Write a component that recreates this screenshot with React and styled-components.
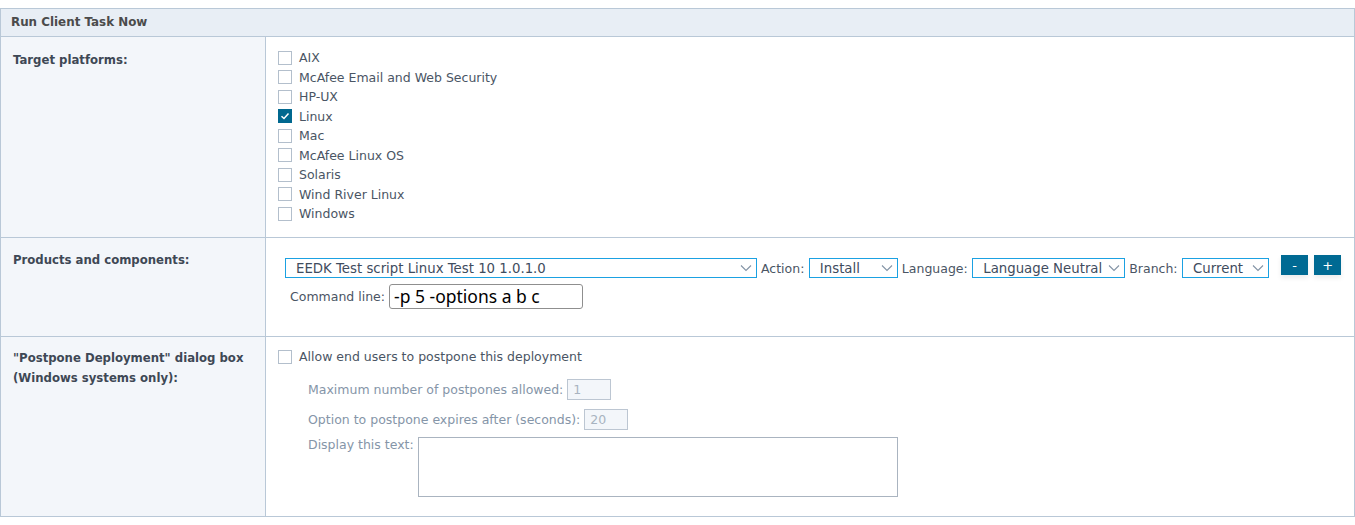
import React from "react";
import styled, { createGlobalStyle } from "styled-components";

const Global = createGlobalStyle`
  html, body { margin: 0; padding: 0; background: #fff; }
  body { padding-top: 8px; font-family: "DejaVu Sans", Verdana, sans-serif; font-size: 12.5px; color: #4a5564; }
`;

const Panel = styled.div`
  width: 1355px;
  box-sizing: border-box;
  border-top: 1px solid #b9c8d7;
  border-left: 1px solid #b9c8d7;
  border-right: 1px solid #b9c8d7;
`;

const Header = styled.div`
  height: 27px;
  line-height: 27px;
  padding-left: 10px;
  background: #e8eef5;
  border-bottom: 1px solid #b9c8d7;
  font-weight: bold;
  color: #4b4b4b;
  font-size: 11.9px;
`;

const Row = styled.div`
  display: grid;
  grid-template-columns: 265px 1fr;
  height: ${(p) => p.$h}px;
  border-bottom: 1px solid #b9c8d7;
`;

const LabelCell = styled.div`
  background: #f3f6fa;
  border-right: 1px solid #b9c8d7;
  padding: ${(p) => p.$pt || 12}px 12px 0 12px;
  font-weight: bold;
  font-size: 11.7px;
  line-height: 20px;
  color: #3e4855;
`;

const ContentCell = styled.div`
  padding: ${(p) => p.$pt}px 0 0 ${(p) => p.$pl}px;
  background: #fff;
`;

const CheckList = styled.div`
  display: flex;
  flex-direction: column;
`;

const CheckItem = styled.label`
  display: flex;
  align-items: center;
  height: 19.5px;
  gap: 7px;
  color: #4a5564;
`;

const Box = styled.span`
  width: 12px;
  height: 12px;
  border: 1px solid #b3bfcc;
  background: ${(p) => (p.$checked ? "#00688f" : "#fff")};
  border-color: ${(p) => (p.$checked ? "#00688f" : "#b3bfcc")};
  display: flex;
  align-items: center;
  justify-content: center;
  flex-shrink: 0;
`;

const Check = ({ checked }) => (
  <Box $checked={checked}>
    {checked && (
      <svg width="10" height="10" viewBox="0 0 10 10">
        <path d="M1.5 5.2 L4 7.5 L8.5 2.5" fill="none" stroke="#fff" strokeWidth="1.5" />
      </svg>
    )}
  </Box>
);

const ControlLine = styled.div`
  display: flex;
  align-items: center;
  height: 20px;
`;

const InlineLabel = styled.span`
  margin: 0 ${(p) => p.$mr ?? 4.5}px 0 ${(p) => p.$ml ?? 4}px;
  color: #4a5564;
  white-space: nowrap;
`;

const Select = styled.div`
  width: ${(p) => p.$w}px;
  height: 20px;
  box-sizing: border-box;
  border: 1px solid #1ba1e2;
  display: flex;
  align-items: center;
  justify-content: space-between;
  padding: 0 4px 0 10px;
  color: #3f4c5e;
  font-size: 13.3px;
  white-space: nowrap;
  flex-shrink: 0;
`;

const Chevron = () => (
  <svg width="12" height="8" viewBox="0 0 12 8">
    <path d="M1 1.5 L6 6.5 L11 1.5" fill="none" stroke="#8393a5" strokeWidth="1.1" />
  </svg>
);

const Btn = styled.button`
  width: 27px;
  height: 20px;
  border: none;
  background: #006a93;
  color: #fff;
  font-family: "DejaVu Sans", sans-serif;
  font-size: 13px;
  padding: 0;
  margin-left: ${(p) => p.$ml}px;
  align-self: flex-start;
  margin-top: -3px;
  box-shadow: 0 3px 5px rgba(0, 0, 0, 0.08);
`;

const CmdLine = styled.div`
  display: flex;
  align-items: center;
  margin-top: 6px;
  padding-left: 5px;
  gap: 4px;
`;

const TextInput = styled.div`
  width: 194px;
  height: 25px;
  box-sizing: border-box;
  border: 1px solid #8f8f8f;
  border-radius: 3px;
  padding-left: 4px;
  font-family: "Noto Sans", "Open Sans", sans-serif;
  font-size: 17.5px;
  line-height: 22px;
  color: #000;
  white-space: nowrap;
  overflow: hidden;
`;

const SubBlock = styled.div`
  padding-left: 30px;
  display: flex;
  flex-direction: column;
`;

const SubLine = styled.div`
  display: flex;
  align-items: ${(p) => (p.$top ? "flex-start" : "center")};
  gap: 4px;
  color: #8595a8;
  margin-top: ${(p) => p.$mt}px;
  span { white-space: nowrap; }
`;

const SmallInput = styled.div`
  width: 44px;
  height: 21px;
  box-sizing: border-box;
  border: 1px solid #bcc6d2;
  background: #f3f6fa;
  color: #a8b3c0;
  padding-left: 5px;
  line-height: 19px;
`;

const TextArea = styled.div`
  width: 480px;
  height: 60px;
  box-sizing: border-box;
  border: 1px solid #aab4c0;
  background: #fff;
`;

const platforms = [
  "AIX",
  "McAfee Email and Web Security",
  "HP-UX",
  "Linux",
  "Mac",
  "McAfee Linux OS",
  "Solaris",
  "Wind River Linux",
  "Windows",
];

export default function App() {
  return (
    <>
      <Global />
      <Panel>
        <Header>Run Client Task Now</Header>
        <Row $h={200}>
          <LabelCell $pt={13}>Target platforms:</LabelCell>
          <ContentCell $pt={11} $pl={12}>
            <CheckList>
              {platforms.map((p) => (
                <CheckItem key={p}>
                  <Check checked={p === "Linux"} />
                  {p}
                </CheckItem>
              ))}
            </CheckList>
          </ContentCell>
        </Row>
        <Row $h={98}>
          <LabelCell>Products and components:</LabelCell>
          <ContentCell $pt={20} $pl={19}>
            <ControlLine>
              <Select $w={472}>
                EEDK Test script Linux Test 10 1.0.1.0
                <Chevron />
              </Select>
              <InlineLabel>Action:</InlineLabel>
              <Select $w={89}>
                Install
                <Chevron />
              </Select>
              <InlineLabel>Language:</InlineLabel>
              <Select $w={153}>
                Language Neutral
                <Chevron />
              </Select>
              <InlineLabel>Branch:</InlineLabel>
              <Select $w={87}>
                Current
                <Chevron />
              </Select>
              <Btn $ml={12}>-</Btn>
              <Btn $ml={6}>+</Btn>
            </ControlLine>
            <CmdLine>
              <InlineLabel $ml={0} $mr={0}>Command line:</InlineLabel>
              <TextInput>-p 5 -options a b c</TextInput>
            </CmdLine>
          </ContentCell>
        </Row>
        <Row $h={179}>
          <LabelCell $pt={11}>
            "Postpone Deployment" dialog box
            <br />
            (Windows systems only):
          </LabelCell>
          <ContentCell $pt={10} $pl={12}>
            <CheckItem>
              <Check />
              Allow end users to postpone this deployment
            </CheckItem>
            <SubBlock>
              <SubLine $mt={12}>
                <span>Maximum number of postpones allowed:</span>
                <SmallInput>1</SmallInput>
              </SubLine>
              <SubLine $mt={9}>
                <span>Option to postpone expires after (seconds):</span>
                <SmallInput>20</SmallInput>
              </SubLine>
              <SubLine $mt={7} $top>
                <span>Display this text:</span>
                <TextArea />
              </SubLine>
            </SubBlock>
          </ContentCell>
        </Row>
      </Panel>
    </>
  );
}
